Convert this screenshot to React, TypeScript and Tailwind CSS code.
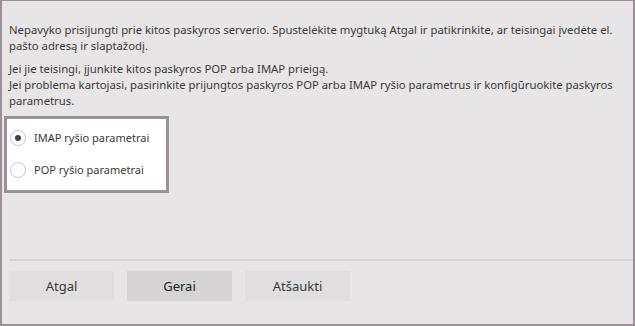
import { useState } from "react";

const options = [
  { id: "imap", label: "IMAP ryšio parametrai" },
  { id: "pop", label: "POP ryšio parametrai" },
];

const buttons = ["Atgal", "Gerai", "Atšaukti"];

const App = () => {
  const [selected, setSelected] = useState("imap");

  return (
    <div
      className="w-[635px] h-[326px] bg-[#e7e5e5] border-t border-x-2 border-b-2 border-[#9b9097] flex flex-col text-[#3a3a3a] text-[11.3px] leading-[16px]"
      style={{ fontFamily: '"Segoe UI", "Noto Sans", sans-serif' }}
    >
      <div className="pl-[7px] pr-2 pt-[21px] whitespace-nowrap">
        <p>
          Nepavyko prisijungti prie kitos paskyros serverio. Spustelėkite mygtuką Atgal ir patikrinkite, ar teisingai įvedėte el.
          <br />
          pašto adresą ir slaptažodį.
        </p>
        <p className="mt-[7px]">
          Jei jie teisingi, įjunkite kitos paskyros POP arba IMAP prieigą.
          <br />
          Jei problema kartojasi, pasirinkite prijungtos paskyros POP arba IMAP ryšio parametrus ir konfigūruokite paskyros
          <br />
          parametrus.
        </p>
      </div>

      <div className="ml-[2px] mt-[7px] w-[165px] h-[77px] bg-white border-[3px] border-[#9c9198] flex flex-col justify-center gap-[16px] pl-[3px] pb-[2px] text-[11px]">
        {options.map((o) => (
          <label key={o.id} className="flex items-center gap-[8px] cursor-pointer" onClick={() => setSelected(o.id)}>
            <span className="w-[16px] h-[16px] rounded-full border border-[#c9c7c7] bg-white flex items-center justify-center">
              {selected === o.id && <span className="w-[6px] h-[6px] rounded-full bg-[#444]" />}
            </span>
            <span>{o.label}</span>
          </label>
        ))}
      </div>

      <div className="mt-auto ml-[7px] border-t-2 border-[#d6d4d4]" />
      <div className="flex gap-[13px] pl-[7px] pt-[10px] pb-[23px]">
        {buttons.map((b) => (
          <button
            key={b}
            className={`w-[105px] h-[30px] text-[13px] ${b === "Gerai" ? "bg-[#d6d4d4] text-[#222]" : "bg-[#e0dede] text-[#3a3a3a]"}`}
          >
            {b}
          </button>
        ))}
      </div>
    </div>
  );
};

export default App;
